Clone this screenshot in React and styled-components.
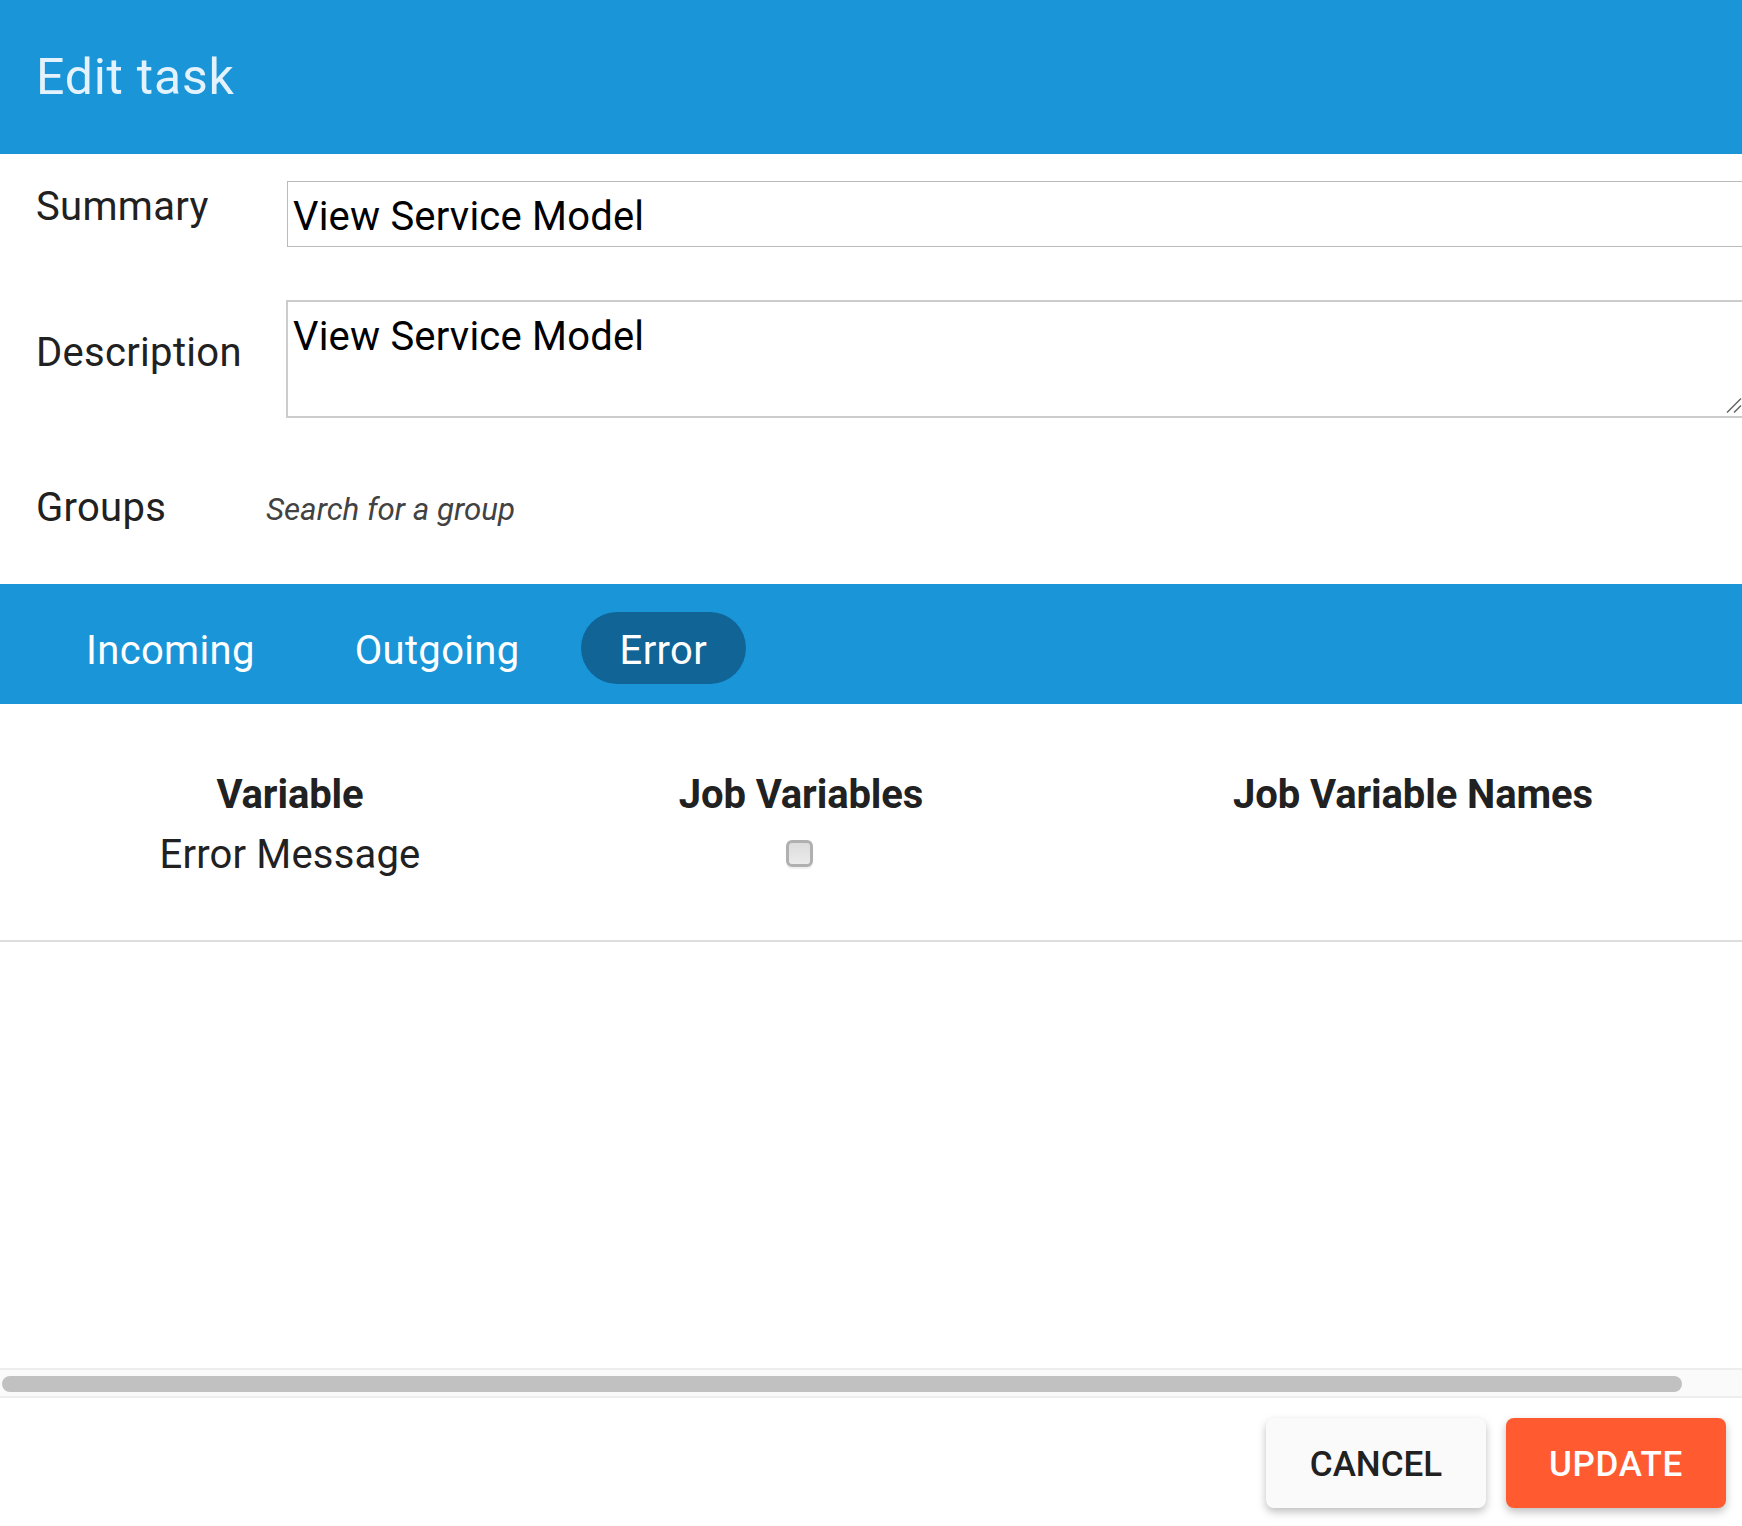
import React from "react";
import styled, { createGlobalStyle } from "styled-components";

const Global = createGlobalStyle`
  html, body { margin: 0; padding: 0; background: #fff; }
  body { font-family: Roboto, "Liberation Sans", sans-serif; color: #212121; }
`;

const Dialog = styled.div`
  width: 100vw;
  height: 1526px;
  display: flex;
  flex-direction: column;
  overflow: hidden;
`;
const ScrollArea = styled.div`
  flex: 1;
  min-height: 0;
  overflow: hidden;
`;
const Content = styled.div`
  width: 1804px;
`;
const Header = styled.header`
  height: 154px;
  background: #1995d8;
  display: flex;
  align-items: center;
  padding-left: 36px;
`;
const Title = styled.h1`
  margin: 0;
  font-size: 50px;
  font-weight: 400;
  letter-spacing: 0.75px;
  color: #e3f2fd;
`;
const Form = styled.form`
  height: 430px;
  box-sizing: border-box;
  padding-top: 27px;
  display: flex;
  flex-direction: column;
`;
const FormRow = styled.div`
  display: flex;
  align-items: ${(p) => p.$align || "center"};
  margin-bottom: ${(p) => p.$gap || 0}px;
`;
const Label = styled.label`
  width: 250px;
  box-sizing: border-box;
  padding-left: 36px;
  font-size: 40px;
  letter-spacing: 0.3px;
  line-height: 48px;
  flex: none;
  margin-top: ${(p) => p.$top || 0}px;
  margin-bottom: ${(p) => p.$bottom || 0}px;
`;
const TextInput = styled.input`
  width: 1460px;
  height: 66px;
  margin-left: 37px;
  box-sizing: border-box;
  border: 1px solid #bbb;
  padding: 4px 5px 0;
  font-family: Roboto, sans-serif;
  font-size: 40px;
  letter-spacing: 0.2px;
  color: #000;
  background: #fff;
  outline: none;
`;
const TextAreaBox = styled.div`
  position: relative;
  margin-left: 36px;
`;
const TextArea = styled.textarea`
  width: 1458px;
  height: 118px;
  box-sizing: border-box;
  border: 2px solid #ccc;
  padding: 11px 5px 0;
  font-family: Roboto, sans-serif;
  font-size: 40px;
  letter-spacing: 0.2px;
  line-height: 1.2;
  color: #000;
  background: #fff;
  outline: none;
  display: block;
  resize: none;
`;
const Grip = styled.svg`
  position: absolute;
  right: 2px;
  bottom: 5px;
  width: 16px;
  height: 16px;
  stroke: #666;
  stroke-width: 1.5;
  fill: none;
`;
const GroupSearch = styled.input`
  width: 600px;
  margin: 2px 0 0 16px;
  border: 0;
  padding: 0;
  outline: none;
  font-family: Roboto, sans-serif;
  font-style: italic;
  font-size: 31.3px;
  line-height: 48px;
  color: #424242;
  &::placeholder { color: #424242; opacity: 1; }
`;
const Tabs = styled.nav`
  height: 120px;
  background: #1995d8;
  display: flex;
  gap: 22px;
  padding: 28px 0 0 47px;
  box-sizing: border-box;
`;
const Tab = styled.div`
  height: 72px;
  padding: 4px 39px 0;
  box-sizing: border-box;
  border-radius: 36px;
  display: flex;
  align-items: center;
  font-size: 40px;
  letter-spacing: 0.33px;
  color: #fff;
  background: ${(p) => (p.$active ? "#106496" : "transparent")};
`;
const VarTable = styled.div`
  display: grid;
  grid-template-columns: 580px 442px 782px;
  padding-top: 61px;
  padding-bottom: 55px;
  border-bottom: 2px solid #ddd;
  justify-items: center;
  align-items: center;
`;
const HeadCell = styled.div`
  font-size: 40px;
  font-weight: 700;
  letter-spacing: -0.1px;
  line-height: 60px;
`;
const Cell = styled.div`
  font-size: 40px;
  letter-spacing: 0.17px;
  line-height: 60px;
  display: flex;
  align-items: center;
`;
const Check = styled.span`
  display: block;
  width: 27px;
  height: 27px;
  margin: 0 4px 3px 0;
  box-sizing: border-box;
  border: 3px solid #b0b0b0;
  border-radius: 6px;
  background: linear-gradient(#dcdcdc, #ebebeb);
  box-shadow: 0 2px 1px #f0f0f0;
`;
const ScrollTrack = styled.div`
  height: 30px;
  flex: none;
  box-sizing: border-box;
  border-top: 2px solid #eee;
  border-bottom: 2px solid #eee;
  background: #fafafa;
  padding: 6px 60px 0 2px;
`;
const ScrollThumb = styled.div`
  height: 16px;
  border-radius: 8px;
  background: #c1c1c1;
`;
const Footer = styled.footer`
  flex: none;
  height: 128px;
  box-sizing: border-box;
  padding: 20px 16px 0 0;
  display: flex;
  justify-content: flex-end;
  gap: 20px;
`;
const Button = styled.button`
  width: 220px;
  height: 90px;
  border: 0;
  border-radius: 8px;
  padding: 3px 0 0;
  font-family: Roboto, sans-serif;
  font-size: 35px;
  font-weight: 500;
  letter-spacing: ${(p) => (p.$primary ? "0.7px" : "0")};
  color: ${(p) => (p.$primary ? "#fff" : "#212121")};
  background: ${(p) => (p.$primary ? "#ff5a30" : "#fafafa")};
  box-shadow: 0 4px 8px rgba(0, 0, 0, 0.25);
`;

export default function App() {
  return (
    <Dialog>
      <Global />
      <ScrollArea>
        <Content>
          <Header>
            <Title>Edit task</Title>
          </Header>
          <Form>
            <FormRow $align="flex-start" $gap={53}>
              <Label $top={2}>Summary</Label>
              <TextInput readOnly value="View Service Model" />
            </FormRow>
            <FormRow $gap={66}>
              <Label $bottom={12}>Description</Label>
              <TextAreaBox>
                <TextArea readOnly value="View Service Model" />
                <Grip viewBox="0 0 16 16">
                  <path d="M1 15.5 15 1.5M8 15.5 15 8.5" />
                </Grip>
              </TextAreaBox>
            </FormRow>
            <FormRow>
              <Label $bottom={2}>Groups</Label>
              <GroupSearch placeholder="Search for a group" />
            </FormRow>
          </Form>
          <Tabs>
            <Tab>Incoming</Tab>
            <Tab>Outgoing</Tab>
            <Tab $active>Error</Tab>
          </Tabs>
          <VarTable>
            <HeadCell>Variable</HeadCell>
            <HeadCell>Job Variables</HeadCell>
            <HeadCell>Job Variable Names</HeadCell>
            <Cell>Error Message</Cell>
            <Cell><Check /></Cell>
            <Cell />
          </VarTable>
        </Content>
      </ScrollArea>
      <ScrollTrack>
        <ScrollThumb />
      </ScrollTrack>
      <Footer>
        <Button>CANCEL</Button>
        <Button $primary>UPDATE</Button>
      </Footer>
    </Dialog>
  );
}
